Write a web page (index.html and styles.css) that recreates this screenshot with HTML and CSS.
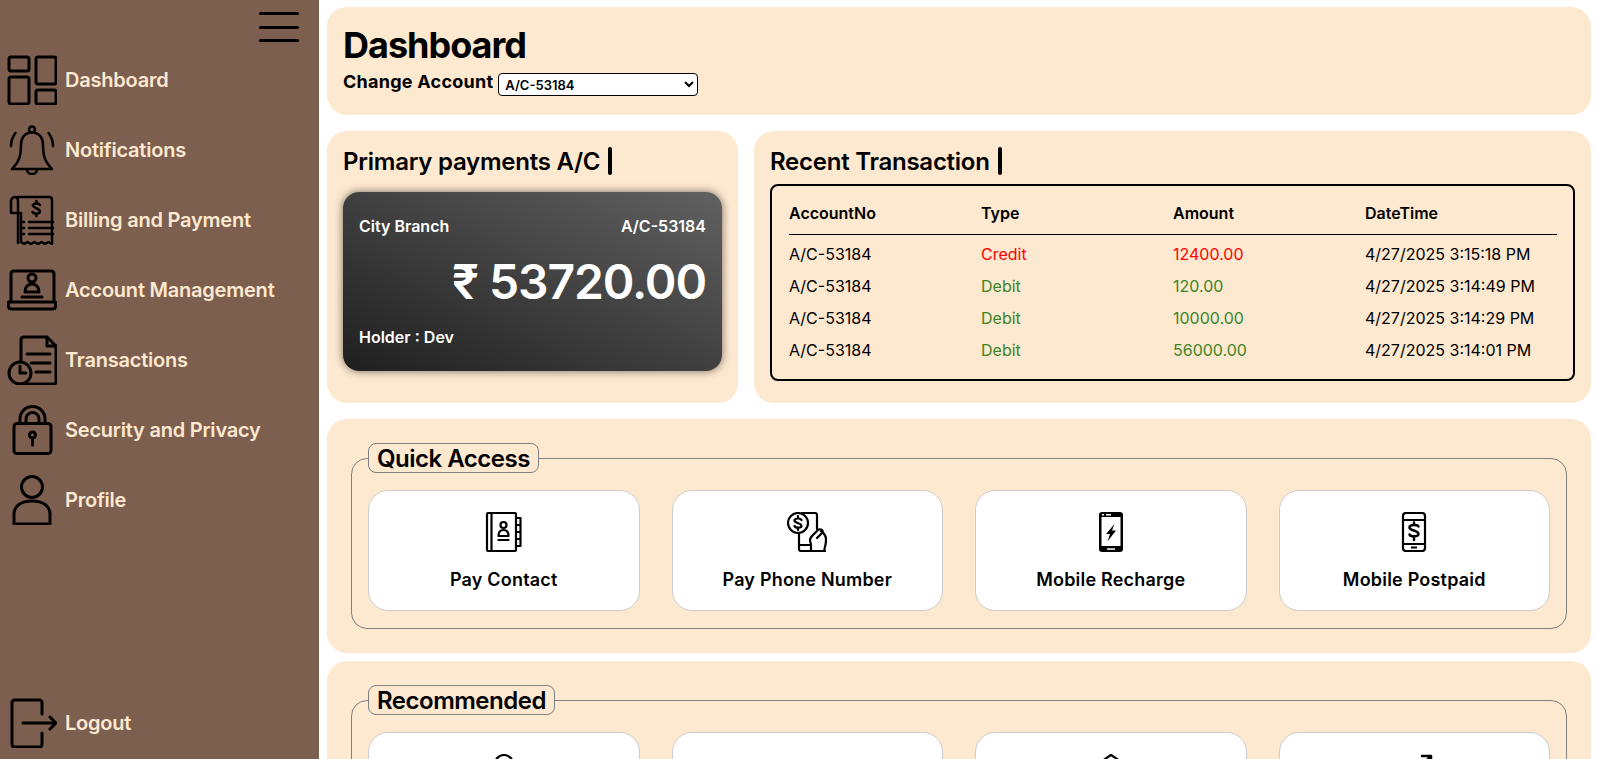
FILE: index.html
```html
<!DOCTYPE html>
<html lang="en">
  <head>
    <meta charset="utf-8">
    <title>Dashboard</title>
    <link rel="stylesheet" href="styles.css">
  </head>
  <body>
    <aside class="sidebar">
      <div class="menu-toggle">
        <span></span>
        <span></span>
        <span></span>
      </div>
      <ul class="nav">
        <li>
          <svg class="nav-icon" viewBox="0 0 50 50"><rect x="2" y="2" width="20" height="14" rx="2"/><rect x="2" y="22" width="20" height="27" rx="2"/><rect x="29" y="2" width="20" height="27" rx="2"/><rect x="29" y="35" width="20" height="14" rx="2"/></svg>
          <span>Dashboard</span>
        </li>
        <li>
          <svg class="nav-icon thin" viewBox="0 0 50 50"><circle cx="25" cy="4.500" r="3"/><path d="M25 7.500c-7 0-11 5-11 12 0 10-1 16-9 24.500h40c-8-8.500-9-14.500-9-24.500 0-7-4-12-11-12z"/><path d="M20 44.500c0 6 10 6 10 0"/><path d="M4 21c0-6 1.500-9 4.500-13M46 21c0-6-1.500-9-4.500-13"/></svg>
          <span>Notifications</span>
        </li>
        <li>
          <svg class="nav-icon thin" viewBox="0 0 50 50"><path d="M11 2h31c2 0 3 1 3 3v44l-3.500-2-3.500 2-3.500-2-3.500 2-3.500-2-3.500 2-3.500-2-3.500 2-3-2V18H4V6c0-2 2-4 4-4 2 0 3 2 3 4v42"/><path d="M33 10c-1-2-6-2-7 0-1 3 7 3 7 6.500 0 2.500-6 3-7.500 .5M29.500 6v2M29.500 19v2"/><path d="M22 27h24M22 33h24M22 39h24M16 27h1M16 33h1M16 39h1"/></svg>
          <span>Billing and Payment</span>
        </li>
        <li>
          <svg class="nav-icon" viewBox="0 0 50 50"><path d="M4 36V9c0-2 1-3 3-3h37c2 0 3 1 3 3v27"/><path d="M1.500 37h47v4c0 2-1 3-3 3h-41c-2 0-3-1-3-3z"/><circle cx="25" cy="13" r="4"/><path d="M18 27c0-5 3-8 7-8s7 3 7 8z"/><path d="M15 32h20"/></svg>
          <span>Account Management</span>
        </li>
        <li>
          <svg class="nav-icon" viewBox="0 0 50 50"><path d="M14 26V5c0-2 1-3 3-3h23l9 9v36c0 1-1 2-2 2H13"/><path d="M40 2v9h9"/><path d="M20 19h23M24 28h19M29 37h14"/><circle cx="13" cy="38" r="11"/><path d="M13 31v7h6"/></svg>
          <span>Transactions</span>
        </li>
        <li>
          <svg class="nav-icon" viewBox="0 0 50 50"><path d="M13 18V14a12 12 0 0 1 25 0v4M19 18v-4a6.500 6.500 0 0 1 13 0v4"/><rect x="7" y="18.500" width="37" height="30" rx="3"/><circle cx="25.500" cy="30" r="3"/><path d="M25.500 33v7"/></svg>
          <span>Security and Privacy</span>
        </li>
        <li>
          <svg class="nav-icon" viewBox="0 0 50 50"><circle cx="25" cy="12" r="10.500"/><path d="M7 49V39c0-8 7-13 18-13s18 5 18 13v10z"/></svg>
          <span>Profile</span>
        </li>
      </ul>
      <div class="logout">
        <svg class="nav-icon" viewBox="0 0 50 50"><path d="M35 16V5c0-2-1-3-3-3H8C6 2 5 3 5 5v41c0 2 1 3 3 3h24c2 0 3-1 3-3V35"/><path d="M16 25h33M43 19l6 6-6 6"/></svg>
        <span>Logout</span>
      </div>
    </aside>

    <main class="content">
      <section class="panel panel-header">
        <h1>Dashboard</h1>
        <div class="account-switch">
          <label for="account">Change Account</label>
          <select id="account">
            <option>A/C-53184</option>
          </select>
        </div>
      </section>

      <div class="row">
        <section class="panel panel-primary">
          <h2 class="panel-title">Primary payments A/C <i class="caret"></i></h2>
          <div class="bank-card">
            <div class="bank-card-top">
              <span>City Branch</span>
              <span>A/C-53184</span>
            </div>
            <div class="bank-card-amount">₹ 53720.00</div>
            <div class="bank-card-holder">Holder : Dev</div>
          </div>
        </section>

        <section class="panel panel-recent">
          <h2 class="panel-title">Recent Transaction <i class="caret"></i></h2>
          <div class="table-box">
            <table>
              <thead>
                <tr><th>AccountNo</th><th>Type</th><th>Amount</th><th>DateTime</th></tr>
              </thead>
              <tbody>
                <tr class="credit"><td>A/C-53184</td><td>Credit</td><td>12400.00</td><td>4/27/2025 3:15:18 PM</td></tr>
                <tr class="debit"><td>A/C-53184</td><td>Debit</td><td>120.00</td><td>4/27/2025 3:14:49 PM</td></tr>
                <tr class="debit"><td>A/C-53184</td><td>Debit</td><td>10000.00</td><td>4/27/2025 3:14:29 PM</td></tr>
                <tr class="debit"><td>A/C-53184</td><td>Debit</td><td>56000.00</td><td>4/27/2025 3:14:01 PM</td></tr>
              </tbody>
            </table>
          </div>
        </section>
      </div>

      <section class="panel panel-group">
        <fieldset>
          <legend>Quick Access</legend>
          <div class="tiles">
            <div class="tile">
              <svg class="tile-icon" viewBox="0 0 40 40"><rect x="3" y="1" width="29" height="38" rx="1.500"/><path d="M7.500 1v38"/><path d="M32 6h4.500v28H32M32 13h4.500M32 20h4.500M32 27h4.500"/><circle cx="19.500" cy="13" r="3"/><path d="M14.500 24c0-4 2-6 5-6s5 2 5 6z"/><path d="M14.500 28h10"/></svg>
              <span>Pay Contact</span>
            </div>
            <div class="tile">
              <svg class="tile-icon" viewBox="0 0 40 40"><circle cx="11" cy="11" r="10"/><path d="M14.500 8c-1-2-6-2-7 0-1 3 7 3 7 6 0 2-6 2.500-7 0M11 4v2M11 16v2"/><path d="M15 1h13c1.500 0 2 1 2 2v14M12 21v16c0 1 1 2 2 2h24"/><path d="M12 33h12"/><path d="M24 39v-6c0-2-1-3-1-5 0-2 1-3 3-5l5-5c1-1 3-1 4 0 1 1 1 2 0 3l-5 5"/><path d="M34 19c3 2 5 5 5 9 0 4-1 7-2 11"/></svg>
              <span>Pay Phone Number</span>
            </div>
            <div class="tile">
              <svg class="tile-icon" viewBox="0 0 40 40"><rect class="solid" x="8" y="0" width="24" height="40" rx="3"/><rect class="hole" x="10.500" y="5" width="19" height="29"/><rect class="hole" x="11" y="2" width="2" height="1.500"/><rect class="hole" x="15" y="2" width="5" height="1.500"/><rect class="hole" x="16" y="36.300" width="8" height="1.500"/><path class="solid" d="M23.500 12l-8.500 10h4l-2.500 7.500 8.500-11h-4z"/></svg>
              <span>Mobile Recharge</span>
            </div>
            <div class="tile">
              <svg class="tile-icon" viewBox="0 0 40 40"><rect x="9" y="1" width="22" height="38" rx="3"/><path d="M9 8h22M9 32h22"/><path class="thick" d="M24.500 14.500c-1-2-8-2-9 .5-1 4 9 3 9 7 0 3-8 3-9 .5M20 10.500v1.500M20 26v2"/><rect class="solid" x="17" y="34.500" width="6" height="2"/></svg>
              <span>Mobile Postpaid</span>
            </div>
          </div>
        </fieldset>
      </section>

      <section class="panel panel-group">
        <fieldset>
          <legend>Recommended</legend>
          <div class="tiles">
            <div class="tile">
              <svg class="tile-icon" viewBox="0 0 40 40"><circle cx="20" cy="10" r="9"/><path d="M5 39c0-10 6-16 15-16s15 6 15 16z"/></svg>
            </div>
            <div class="tile"></div>
            <div class="tile">
              <svg class="tile-icon" viewBox="0 0 40 40"><path d="M20 1l9 6h6v14c0 9-6 15-15 18C11 36 5 30 5 21V7h6z"/></svg>
            </div>
            <div class="tile">
              <svg class="tile-icon" viewBox="0 0 40 40"><path class="thick" d="M28 2h9v9M37 2L22 17"/><rect x="4" y="14" width="24" height="24" rx="2"/></svg>
            </div>
          </div>
        </fieldset>
      </section>
    </main>
  </body>
</html>
```

FILE: styles.css
```css
* {
  box-sizing: border-box;
}

html,
body {
  height: 100%;
}

body {
  margin: 0;
  display: flex;
  overflow: hidden;
  font-family: Inter, "Liberation Sans", sans-serif;
  color: #000;
  background-color: #fff;
}

svg {
  fill: none;
  stroke: #000;
  stroke-linecap: round;
  stroke-linejoin: round;
  flex-shrink: 0;
}

.sidebar {
  width: 319px;
  flex-shrink: 0;
  height: 100%;
  display: flex;
  flex-direction: column;
  background-color: #7d5f4f;
  color: #fde8d0;
  font-size: 20px;
  font-weight: 600;
  letter-spacing: -0.22px;
}

.menu-toggle {
  align-self: flex-end;
  width: 40px;
  height: 30px;
  margin: 12px 20px 13px 0;
  display: flex;
  flex-direction: column;
  justify-content: space-between;
}

.menu-toggle span {
  height: 3px;
  border-radius: 2px;
  background-color: #000;
}

.nav {
  list-style: none;
  margin: 0;
  padding: 0 0 0 7px;
  display: flex;
  flex-direction: column;
  gap: 20px;
}

.nav li,
.logout {
  display: flex;
  align-items: center;
  gap: 8px;
  height: 50px;
}

.nav-icon {
  width: 50px;
  height: 50px;
  stroke-width: 3;
}

.nav-icon.thin {
  stroke-width: 2.500;
}

.logout {
  margin: auto 0 11px 7px;
}

.content {
  flex: 1;
  min-width: 0;
  height: 100%;
  padding: 7px 7px 0 8px;
  display: flex;
  flex-direction: column;
  gap: 16px;
}

.panel {
  flex-shrink: 0;
  background-color: #fde8d0;
  border-radius: 20px;
}

.panel-header {
  height: 108px;
  padding: 16px;
}

h1 {
  margin: 0;
  font-size: 36px;
  font-weight: 700;
  line-height: 44px;
  letter-spacing: -1px;
}

.account-switch {
  display: flex;
  align-items: center;
  gap: 5px;
  font-size: 18px;
  font-weight: 700;
  letter-spacing: 0.25px;
}

select {
  width: 200px;
  height: 23px;
  margin-top: 6px;
  padding: 0 2px;
  font-family: inherit;
  font-size: 13px;
  font-weight: 600;
  border: 1px solid #000;
  border-radius: 4px;
  background-color: #fff;
}

.row {
  display: flex;
  gap: 16px;
  flex-shrink: 0;
}

.panel-primary {
  width: 411px;
  height: 272px;
  padding: 14px 16px 0;
}

.panel-recent {
  flex: 1;
  min-width: 0;
  height: 272px;
  padding: 14px 16px 0;
}

.panel-title {
  margin: 0;
  height: 32px;
  display: flex;
  align-items: center;
  gap: 8px;
  font-size: 24px;
  font-weight: 600;
  letter-spacing: -0.25px;
  white-space: nowrap;
}

.caret {
  width: 4px;
  height: 28px;
  border-radius: 2px;
  background-color: #000;
}

.bank-card {
  height: 179px;
  margin-top: 15px;
  padding: 24px 16px 0;
  border-radius: 16px;
  color: #fff;
  font-size: 16px;
  font-weight: 600;
  background: linear-gradient(to bottom left, #616161, #1f1f1f);
  box-shadow: 0 0 8px rgba(0, 0, 0, 0.55);
}

.bank-card-top {
  display: flex;
  justify-content: space-between;
}

.bank-card-amount {
  margin-top: 17px;
  text-align: right;
  font-size: 48px;
  font-weight: 600;
  line-height: 58px;
  letter-spacing: -1.1px;
}

.bank-card-holder {
  margin-top: 16px;
}

.table-box {
  height: 197px;
  margin-top: 7px;
  padding: 6px 16px 0 17px;
  border: 2px solid #000;
  border-radius: 8px;
}

table {
  width: 100%;
  table-layout: fixed;
  border-collapse: collapse;
  font-size: 16px;
}

th {
  height: 42px;
  padding: 0;
  text-align: left;
  font-weight: 600;
  border-bottom: 1px solid #000;
}

td {
  height: 32px;
  padding: 0;
}

tbody tr:first-child td {
  height: 36px;
  padding-top: 4px;
}

.credit td:nth-child(2),
.credit td:nth-child(3) {
  color: #f00;
}

.debit td:nth-child(2),
.debit td:nth-child(3) {
  color: #3c8527;
}

.panel-group {
  padding: 24px;
}

.panel-group + .panel-group {
  margin-top: -8px;
}

fieldset {
  margin: 0;
  min-width: 0;
  padding: 17px 16px;
  border: 1px solid #808080;
  border-radius: 16px;
}

legend {
  padding: 0 8px;
  height: 30px;
  font-size: 24px;
  font-weight: 600;
  line-height: 30px;
  letter-spacing: -0.5px;
  border: 1px solid #808080;
  border-radius: 8px;
}

.tiles {
  display: grid;
  grid-template-columns: repeat(4, 1fr);
  gap: 32px;
}

.tile {
  height: 121px;
  padding-top: 21px;
  display: flex;
  flex-direction: column;
  align-items: center;
  gap: 17px;
  background-color: #fff;
  border: 1px solid #ccc;
  border-radius: 20px;
  font-size: 18px;
  font-weight: 600;
  letter-spacing: 0.2px;
}

.tile-icon {
  width: 40px;
  height: 40px;
  stroke-width: 2.200;
}

.tile-icon .solid {
  fill: #000;
  stroke: none;
}

.tile-icon .hole {
  fill: #fff;
  stroke: none;
}

.tile-icon .thick {
  stroke-width: 2.500;
}
```
